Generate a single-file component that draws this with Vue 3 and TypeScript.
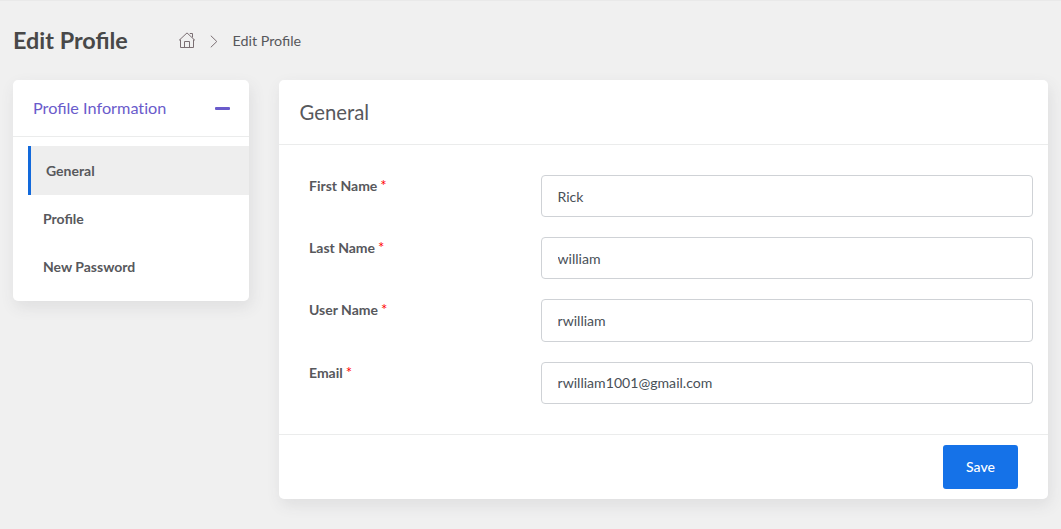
<script setup lang="ts">
import { ref } from 'vue'

interface Field {
  id: string
  label: string
  value: string
}

const tabs = ['General', 'Profile', 'New Password']
const active = ref('General')

const fields = ref<Field[]>([
  { id: 'first-name', label: 'First Name', value: 'Rick' },
  { id: 'last-name', label: 'Last Name', value: 'william' },
  { id: 'user-name', label: 'User Name', value: 'rwilliam' },
  { id: 'email', label: 'Email', value: 'rwilliam1001@gmail.com' },
])
</script>

<template>
  <div class="page">
    <header class="page-header">
      <h1 class="title">Edit Profile</h1>
      <nav class="breadcrumb">
        <svg class="home" width="18" height="17" viewBox="0 0 18 17" fill="none" stroke="currentColor">
          <path d="M1 8.4 9 .9l8 7.5M2.500 7.500v8h13v-8M6.500 15.500v-6h5v6M11.800 1.500h2.700v3.900" />
        </svg>
        <svg class="chevron" width="8" height="13" viewBox="0 0 8 13" fill="none" stroke="currentColor">
          <path d="M.8.7 6.800 6.500.8 12.300" />
        </svg>
        <span>Edit Profile</span>
      </nav>
    </header>

    <main class="content">
      <aside class="card side">
        <div class="side-head">
          <span>Profile <span class="plain">Information</span></span>
          <i class="minus"></i>
        </div>
        <ul class="tabs">
          <li
            v-for="tab in tabs"
            :key="tab"
            class="tab"
            :class="{ active: tab === active }"
            @click="active = tab"
          >
            {{ tab }}
          </li>
        </ul>
      </aside>

      <form class="card main" @submit.prevent>
        <h2 class="main-head">General</h2>
        <div class="fields">
          <div v-for="field in fields" :key="field.id" class="row">
            <label class="label" :for="field.id">{{ field.label }}<span class="req">*</span></label>
            <input :id="field.id" v-model="field.value" class="input" type="text" />
          </div>
        </div>
        <footer class="foot">
          <button class="save" type="submit">Save</button>
        </footer>
      </form>
    </main>
  </div>
</template>

<style>
body {
  background: #f0f0f0;
}
</style>

<style scoped>
.page {
  box-sizing: border-box;
  min-height: 529px;
  padding: 0 13px 30px;
  border-top: 1px solid #e9e9e9;
  background: #f0f0f0;
  color: #57585c;
  font-family: Lato, "Liberation Sans", sans-serif;
  font-size: 14px;
}

.page *,
.page *::before {
  box-sizing: border-box;
}

.page-header {
  display: flex;
  align-items: center;
  height: 79px;
}

.title {
  width: 165px;
  margin: 0;
  padding-bottom: 2px;
  color: #484848;
  font-size: 23.4px;
  font-weight: 700;
  line-height: 30px;
  white-space: nowrap;
}

.breadcrumb {
  display: flex;
  align-items: center;
  font-size: 14.3px;
  line-height: 20px;
}

.home {
  color: #7a6e72;
}

.chevron {
  margin: 1px 14.500px 0 14px;
  color: #7a6e72;
}

.content {
  display: flex;
  align-items: flex-start;
  gap: 30px;
}

.card {
  border-radius: 5px;
  background: #fff;
  box-shadow: 2px 6px 15px rgba(69, 65, 78, 0.1);
}

.side {
  width: 236px;
  height: 221px;
}

.side-head {
  display: flex;
  align-items: center;
  justify-content: space-between;
  height: 57px;
  padding: 0 19px 0 20px;
  border-bottom: 1px solid #ebecec;
  color: #6a5bcb;
  font-size: 16.25px;
  line-height: 20px;
}

.side-head > span {
  padding-bottom: 1px;
}

.plain {
  font-variant-ligatures: none;
}

.minus {
  width: 15px;
  height: 3px;
  border-radius: 1px;
  background: #6a5bcb;
}

.tabs {
  margin: 0;
  padding: 9px 0 0 15px;
  list-style: none;
}

.tab {
  height: 48px;
  padding-left: 15px;
  font-weight: 700;
  line-height: 48px;
  cursor: pointer;
}

.tab.active {
  height: 49px;
  border-left: 3px solid #1269db;
  background: #eee;
  line-height: 49px;
}

.main {
  flex: 1;
  height: 419px;
}

.main-head {
  height: 65px;
  margin: 0;
  padding: 0 20.500px;
  border-bottom: 1px solid #ebecec;
  font-size: 20.3px;
  font-weight: 400;
  line-height: 64px;
}

.fields {
  display: grid;
  align-content: start;
  gap: 20px;
  height: 289px;
  padding: 30px 15px 30px 30px;
}

.row {
  display: flex;
  align-items: flex-start;
}

.label {
  width: 232px;
  font-weight: 700;
  line-height: 22px;
}

.req {
  margin-left: 3px;
  color: #f00;
  font-size: 15px;
  font-weight: 400;
  line-height: 1;
}

.input {
  flex: 1;
  min-width: 0;
  height: 42.2px;
  padding: 0 15.500px;
  border: 1px solid #cfd2d6;
  border-radius: 4px;
  outline: none;
  background: #fff;
  color: #495057;
  font: inherit;
  font-size: 14.1px;
}

.foot {
  display: flex;
  justify-content: flex-end;
  padding: 10px 30px;
  border-top: 1px solid #ebecec;
}

.save {
  width: 75px;
  height: 44px;
  padding: 0 0 1px;
  border: 0;
  border-radius: 3px;
  background: #1572e8;
  color: #fff;
  font: inherit;
  font-weight: 500;
}
</style>
